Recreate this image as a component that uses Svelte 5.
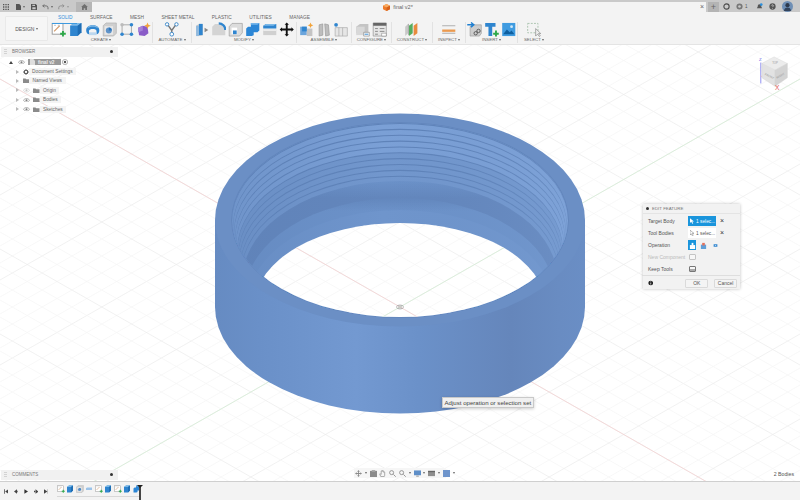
<script>
  const tabs = ["SOLID", "SURFACE", "MESH", "SHEET METAL", "PLASTIC", "UTILITIES", "MANAGE"]

  const tree = [
    { label: "Document Settings", icon: "gear" },
    { label: "Named Views", icon: "folder" },
    { label: "Origin", icon: "folder", eye: true, dim: true },
    { label: "Bodies", icon: "folder", eye: true },
    { label: "Sketches", icon: "folder", eye: true }
  ]

  // threads inside the ring, top to bottom
  const threads = []
  for (let i = 0; i < 10; i++) {
    const y = 123 + i * 5.85
    const rx = 168 - i * 1.05
    threads.push({ y, rx, color: "#5f83b9" })
    threads.push({ y: y + 1.1, rx, color: i < 5 ? "#7ba0d6" : "#7297cd" })
  }

  // isometric floor grid
  const gridLines = []
  for (let k = -50; k <= 50; k++) {
    const c = 307 + k * 17
    const major = k % 5 == 0
    gridLines.push({ y1: c - 400 * 0.57, y2: c + 400 * 0.57, major })
    gridLines.push({ y1: c + 400 * 0.57, y2: c - 400 * 0.57, major })
  }

  const timeline = ["sketch", "extrude", "hole", "flat", "sketch", "extrude", "sketch", "extrude", "combine"]
</script>

{#snippet sketch()}
  <svg class="ic" viewBox="0 0 16 16"><rect x="1" y="1.5" width="11.5" height="11.5" fill="#fff" stroke="#9a9a9a"/><path d="M3 10l6-6" stroke="#d29a6a" stroke-width="1.2"/><path d="M3 3.5h2M7 3.5h2" stroke="#bbb"/><path d="M12.5 9.5v6M9.5 12.5h6" stroke="#2ea84a" stroke-width="2"/></svg>
{/snippet}
{#snippet extrude()}
  <svg class="ic" viewBox="0 0 16 16"><path d="M2 4l4-3h8v10l-4 4H2z" fill="#2f85cf"/><path d="M2 4l4-3h8l-4 3z" fill="#7cb9e8"/><path d="M10 4l4-3v10l-4 4z" fill="#1e6db4"/></svg>
{/snippet}
{#snippet hole()}
  <svg class="ic" viewBox="0 0 16 16"><path d="M1 4l3-3h11v11l-3 3H1z" fill="#cfcfcf" stroke="#a5a5a5" stroke-width=".6"/><rect x="2.5" y="4.5" width="9" height="9" fill="#e8e8e8"/><circle cx="7" cy="9" r="3.2" fill="#5f93c8"/><path d="M7 9V5.8A3.2 3.2 0 0 1 10.2 9z" fill="#2d76bc"/></svg>
{/snippet}
{#snippet flat()}
  <svg class="ic" viewBox="0 0 16 16"><path d="M2 6h12v4H2z" fill="#9cc3e8"/><path d="M2 6l3-2h9l-0 2z" fill="#c5dcf1"/></svg>
{/snippet}
{#snippet combine()}
  <svg class="ic" viewBox="0 0 16 16"><path d="M6 1h9v8l-2 2H9v3l-2 1H1V7l2-2h3z" fill="#2b86d6"/><path d="M6 1h9l-2 2H6z" fill="#74b4ea"/></svg>
{/snippet}

{#snippet tlIcon(name)}
  {#if name == "sketch"}{@render sketch()}
  {:else if name == "extrude"}{@render extrude()}
  {:else if name == "hole"}{@render hole()}
  {:else if name == "flat"}{@render flat()}
  {:else}{@render combine()}{/if}
{/snippet}

{#snippet eye(dim)}
  <svg class="eye" class:dim viewBox="0 0 10 6"><path d="M.5 3C2 1 3.500.5 5 .5S8 1 9.500 3C8 5 6.500 5.500 5 5.500S2 5 .5 3z" fill="none" stroke="#7d7d7d" stroke-width=".8"/><circle cx="5" cy="3" r="1.500" fill="#7d7d7d"/></svg>
{/snippet}

{#snippet folder()}
  <svg class="fold" viewBox="0 0 8 6"><path d="M0 .5h3l1 1h4V6H0z" fill="#8b8b8b"/></svg>
{/snippet}

<div class="app">
  <header class="topbar">
    <div class="qat">
      <svg class="tb grid9" viewBox="0 0 9 9" fill="#555"><path d="M0 0h2v2H0zM3.500 0h2v2h-2zM7 0h2v2H7zM0 3.500h2v2H0zM3.500 3.500h2v2h-2zM7 3.500h2v2H7zM0 7h2v2H0zM3.500 7h2v2h-2zM7 7h2v2H7z"/></svg>
      <svg class="tb file" viewBox="0 0 8 9" fill="#555"><path d="M0 0h5l3 3v6H0z"/></svg>
      <i class="caret"></i>
      <svg class="tb save" viewBox="0 0 9 9" fill="#555"><path d="M0 0h7l2 2v7H0z"/><path d="M2 1h4v2H2zM2 5h5v3H2z" fill="#c9c9c9"/></svg>
      <svg class="tb undo" viewBox="0 0 9 8" fill="none" stroke="#666" stroke-width="1.200"><path d="M1 2.500h4.500a2.500 2.500 0 0 1 2.500 2.500v2M3 .5l-2 2 2 2"/></svg>
      <i class="caret"></i>
      <svg class="tb redo" viewBox="0 0 9 8" fill="none" stroke="#8c8c8c" stroke-width="1.200"><path d="M8 2.500H3.500A2.500 2.500 0 0 0 1 5v2M6 .5l2 2-2 2"/></svg>
      <i class="caret light"></i>
    </div>
    <div class="home">
      <svg viewBox="0 0 9 8" fill="#6f6f6f"><path d="M4.500 0L9 4H7.800v4H5.500V5.500h-2V8H1.200V4H0z"/></svg>
    </div>
    <div class="doc-tab">
      <div class="doc-title">
        <svg viewBox="0 0 8 8"><path d="M4 0l4 2v4L4 8 0 6V2z" fill="#ee7b2a"/><path d="M4 0l4 2-4 2-4-2z" fill="#f7ab62"/><path d="M4 4l4-2v4L4 8z" fill="#d6601a"/></svg>
        <span>final v2*</span>
      </div>
      <span class="close">×</span>
    </div>
    <div class="account">
      <span class="plus">+</span>
      <svg class="status" viewBox="0 0 8 8"><circle cx="4" cy="4" r="3" fill="none" stroke="#4b4b4b" stroke-width="1.300"/></svg>
      <span class="clock"><svg viewBox="0 0 8 8"><circle cx="4" cy="4" r="3.500" fill="#777"/><circle cx="4" cy="4" r="1.500" fill="#c9c9c9"/></svg>1</span>
      <svg class="bell" viewBox="0 0 8 8"><path d="M4 1.500c1.500 0 2 1 2 2.500l1 2H1l1-2c0-1.500.5-2.500 2-2.500z" fill="#555"/><circle cx="6" cy="1.800" r="1.500" fill="#2a8fdc"/></svg>
      <svg class="help" viewBox="0 0 8 8"><circle cx="4" cy="4" r="3.600" fill="#555"/><path d="M3 3a1 1 0 1 1 1.500 1L4 4.600" fill="none" stroke="#ddd" stroke-width=".8"/><circle cx="4" cy="6" r=".5" fill="#ddd"/></svg>
      <svg class="avatar" viewBox="0 0 12 12"><circle cx="6" cy="6" r="6" fill="#6f8fb5"/><circle cx="6" cy="4.500" r="2.300" fill="#2e3a4c"/><path d="M2 11c.5-3 2-4 4-4s3.500 1 4 4z" fill="#33445c"/></svg>
    </div>
  </header>

  <section class="toolbar">
    <button class="design">DESIGN <i class="caret"></i></button>
    <div class="ribbon">
      <nav class="tabs">
        {#each tabs as tab, i}
          <span class:active={i == 0}>{tab}</span>
        {/each}
      </nav>
      <div class="groups">
        <div class="group">
          <div class="icons">
            {@render sketch()}
            {@render extrude()}
            <svg class="ic" viewBox="0 0 16 16"><path d="M1 9c0-4 3-5.500 7-5.500S15 5 15 9c0 2.500-1.500 4-3 4V9.500C12 8 10 7.500 8 7.500S4 8 4 9.500V13c-1.500 0-3-1.500-3-4z" fill="#2f85cf"/><path d="M2 7c1-2.500 3-3.500 6-3.500S13 4.500 14 7c-1.500-1.500-3.500-2-6-2S3.500 5.500 2 7z" fill="#7fb8e6"/><path d="M4 11h8v3H4z" fill="#bcd7ee"/></svg>
            {@render hole()}
            <svg class="ic" viewBox="0 0 16 16"><path d="M3 3h10v10H3z" fill="none" stroke="#a8a8a8"/><circle cx="3" cy="3" r="1.900" fill="#bbb"/><circle cx="13" cy="3" r="1.900" fill="#2f85cf"/><circle cx="3" cy="13" r="1.900" fill="#2f85cf"/><circle cx="13" cy="13" r="1.900" fill="#2f85cf"/></svg>
            <svg class="ic" viewBox="0 0 16 16"><path d="M2 6l5-2 5 1 1 7-4 3-6-1z" fill="#8a5cc8"/><path d="M2 6l5-2v5l-5 2z" fill="#a583d8"/><path d="M12 .5l1 2.500 2.500 1-2.500 1-1 2.500-1-2.500-2.500-1 2.500-1z" fill="#f2a33a"/></svg>
          </div>
          <span class="glabel">CREATE <i class="caret"></i></span>
        </div>
        <div class="group">
          <div class="icons">
            <svg class="ic" viewBox="0 0 16 16"><path d="M3 2l5 7 5-7M8 9v4" fill="none" stroke="#777" stroke-width="1.500"/><circle cx="3" cy="2.500" r="1.800" fill="#fff" stroke="#3a86c8"/><circle cx="13" cy="2.500" r="1.800" fill="#fff" stroke="#3a86c8"/><circle cx="8" cy="13" r="2" fill="#fff" stroke="#3a86c8"/></svg>
          </div>
          <span class="glabel">AUTOMATE <i class="caret"></i></span>
        </div>
        <div class="group">
          <div class="icons">
            <svg class="ic" viewBox="0 0 16 16"><path d="M2 4l3-2h4v12l-3 1H2z" fill="#c9c9c9"/><path d="M5 2h4v12H5z" fill="#2f85cf"/><path d="M2 4h3v11H2z" fill="#8fb9de"/><path d="M11 6l4 2.500-4 2.500z" fill="#888"/></svg>
            <svg class="ic" viewBox="0 0 16 16"><path d="M1 14V5l3-3h4a7 7 0 0 1 7 7v5z" fill="#d4d4d4"/><path d="M8 1.500a7 7 0 0 1 7 7" fill="none" stroke="#2f85cf" stroke-width="2.400"/></svg>
            <svg class="ic" viewBox="0 0 16 16"><path d="M1 5l3-3.500h11v10L12 15H1z" fill="#dcdcdc" stroke="#9a9a9a" stroke-width=".7"/><path d="M3.500 6h6v7h-6z" fill="#fff"/><path d="M5 9h4v4H5z" fill="#2f85cf"/></svg>
            {@render combine()}
            <svg class="ic" viewBox="0 0 16 16"><path d="M1 4l3-2h11v5H1z" fill="#2f85cf"/><path d="M1 4l3-2h11l-3 2z" fill="#7cb9e8"/><path d="M1 8h14v6H1z" fill="#d0d0d0"/><path d="M1 8h14v1.500H1z" fill="#eee"/></svg>
            <svg class="ic" viewBox="0 0 16 16" fill="#111"><path d="M8 .5l2.300 2.500H9V7h4V5.700L15.500 8 13 10.300V9H9v4h1.300L8 15.500 5.700 13H7V9H3v1.300L.5 8 3 5.700V7h4V3H5.700z"/></svg>
          </div>
          <span class="glabel">MODIFY <i class="caret"></i></span>
        </div>
        <div class="group">
          <div class="icons">
            <svg class="ic" viewBox="0 0 16 16"><path d="M1 5h7v9H1z" fill="#6ba5dc"/><path d="M8 7h6v8H8z" fill="#c4c4c4"/><path d="M3 5h5v5H3z" fill="#2f85cf"/><path d="M12 .5l.9 2.100 2.100.9-2.100.9-.9 2.100-.9-2.100-2.100-.9 2.100-.9z" fill="#f2a33a"/></svg>
            <svg class="ic" viewBox="0 0 16 16" fill="#bdbdbd" stroke="#8f8f8f" stroke-width=".6"><path d="M3 3l4-1v12l-4 1z"/><path d="M9 2l4 1 1 11-4 1z"/></svg>
            <svg class="ic" viewBox="0 0 16 16"><circle cx="3" cy="3" r="2" fill="#2f85cf"/><path d="M2 6h13v9H2z" fill="#e6e6e6" stroke="#a8a8a8" stroke-width=".7"/><path d="M6 6v9M10 6v9" stroke="#a8a8a8" stroke-width=".7"/></svg>
          </div>
          <span class="glabel">ASSEMBLE <i class="caret"></i></span>
        </div>
        <div class="group">
          <div class="icons">
            <svg class="ic" viewBox="0 0 16 16"><path d="M1 5l4-3h9v10H1z" fill="#c4c4c4"/><path d="M1 5h9v9H1z" fill="#d8d8d8"/><path d="M9 11h6v4H9z" fill="#fff" stroke="#777" stroke-width=".6"/><path d="M10 13h4" stroke="#2f85cf"/></svg>
            <svg class="ic" viewBox="0 0 16 16"><path d="M1 1h14v14H1z" fill="#e6e6e6" stroke="#8f8f8f" stroke-width=".7"/><path d="M1 1h14v3H1z" fill="#666"/><path d="M3 7h3M8 7h5M3 10h3M8 10h5M3 13h3" stroke="#888"/><path d="M10 12h5v3h-5z" fill="#fff" stroke="#777" stroke-width=".5"/></svg>
          </div>
          <span class="glabel">CONFIGURE <i class="caret"></i></span>
        </div>
        <div class="group">
          <div class="icons">
            <svg class="ic" viewBox="0 0 16 16"><path d="M1 5l3-3v10l-3 3z" fill="#c8c8c8"/><path d="M5 4l4-3v11l-4 3z" fill="#55ad5f"/><path d="M10 4l4-3v11l-4 3z" fill="#e88b3e"/><path d="M4.500 2v12" stroke="#aaa"/></svg>
          </div>
          <span class="glabel">CONSTRUCT <i class="caret"></i></span>
        </div>
        <div class="group">
          <div class="icons">
            <svg class="ic" viewBox="0 0 16 16"><path d="M1 4h14" stroke="#aaa"/><path d="M1 8h14v2.500H1z" fill="#eb9a4f"/><path d="M1 12h14" stroke="#aaa"/></svg>
          </div>
          <span class="glabel">INSPECT <i class="caret"></i></span>
        </div>
        <div class="group">
          <div class="icons">
            <svg class="ic" viewBox="0 0 16 16"><path d="M3 5l3-2h9v9l-2 3H3z" fill="#cdcdcd" stroke="#8f8f8f" stroke-width=".6"/><path d="M0 3h6M4 .5L7 3 4 5.500" fill="none" stroke="#1f7fd0" stroke-width="1.500"/><circle cx="9" cy="12" r="1.800" fill="none" stroke="#555"/><circle cx="12" cy="9.500" r="1.800" fill="none" stroke="#555"/></svg>
            <svg class="ic" viewBox="0 0 16 16"><path d="M1 1h11v4H8.500v10h-4V5H1z" fill="#2f85cf"/><path d="M12.500 9v6.500M9.500 12.500h6" stroke="#2ea84a" stroke-width="2"/></svg>
            <svg class="ic" viewBox="0 0 16 16"><path d="M1 1h14v14H1z" fill="#3f9be0"/><path d="M2 13l4-5 3 3 2-2 3 4z" fill="#0f5f9f"/><circle cx="11" cy="5" r="1.500" fill="#cfe7f8"/></svg>
          </div>
          <span class="glabel">INSERT <i class="caret"></i></span>
        </div>
        <div class="group last">
          <div class="icons">
            <svg class="ic" viewBox="0 0 16 16"><rect x="1.500" y="1.500" width="11" height="10" fill="none" stroke="#a9c2ad" stroke-dasharray="2 1.400"/><path d="M10 7v8l2-2 2 2.500 1-.8-2-2.400h2.500z" fill="#eee" stroke="#777" stroke-width=".6"/></svg>
          </div>
          <span class="glabel">SELECT <i class="caret"></i></span>
        </div>
      </div>
    </div>
  </section>

  <main class="viewport">
    <svg class="scene" viewBox="0 45 800 436">
      <defs>
        <g id="floor">
          {#each gridLines as l}
            <line x1="0" y1={l.y1} x2="800" y2={l.y2} stroke={l.major ? "#ebebeb" : "#f5f5f5"} stroke-width=".7"/>
          {/each}
          <line x1="0" y1="79" x2="800" y2="535" stroke="#f3cfcf" stroke-width=".7"/>
          <line x1="0" y1="535" x2="800" y2="79" stroke="#d3ecd3" stroke-width=".7"/>
        </g>
        <linearGradient id="side" x1="215" x2="585" y1="0" y2="0" gradientUnits="userSpaceOnUse">
          <stop offset="0" stop-color="#668bc2"/>
          <stop offset=".12" stop-color="#6a90c8"/>
          <stop offset=".38" stop-color="#7399d1"/>
          <stop offset=".55" stop-color="#6b91c9"/>
          <stop offset=".8" stop-color="#6586bb"/>
          <stop offset=".93" stop-color="#698cc2"/>
          <stop offset="1" stop-color="#6a8ec5"/>
        </linearGradient>
        <linearGradient id="wall" x1="0" x2="0" y1="180" y2="198" gradientUnits="userSpaceOnUse">
          <stop offset="0" stop-color="#6c92c9"/>
          <stop offset="1" stop-color="#6386bc"/>
        </linearGradient>
        <linearGradient id="shelf" x1="0" x2="0" y1="198" y2="211" gradientUnits="userSpaceOnUse">
          <stop offset="0" stop-color="#6387bd"/>
          <stop offset="1" stop-color="#6c92c9"/>
        </linearGradient>
        <linearGradient id="shade" x1="232" x2="568" y1="0" y2="0" gradientUnits="userSpaceOnUse">
          <stop offset="0" stop-color="#5a7eb4" stop-opacity=".35"/>
          <stop offset=".45" stop-color="#5a7eb4" stop-opacity="0"/>
          <stop offset="1" stop-color="#86a9dc" stop-opacity=".25"/>
        </linearGradient>
        <clipPath id="inner"><ellipse cx="400" cy="220" rx="168" ry="97"/></clipPath>
      </defs>

      <rect x="0" y="45" width="800" height="436" fill="#fff"/>
      <use href="#floor"/>

      <path d="M215 220V307A185 106.500 0 0 0 585 307V220z" fill="url(#side)"/>
      <ellipse cx="400" cy="220" rx="185" ry="106.500" fill="#6b8fc5"/>
      <ellipse cx="400" cy="220" rx="168.800" ry="97.800" fill="#6285bb"/>

      <g clip-path="url(#inner)">
        <rect x="215" y="110" width="370" height="220" fill="#7297cd"/>
        {#each threads as t}
          <ellipse cx="400" cy={t.y + 97} rx={t.rx} ry="97" fill={t.color}/>
        {/each}
        <ellipse cx="400" cy="278" rx="157" ry="97" fill="url(#wall)"/>
        <ellipse cx="400" cy="295" rx="155" ry="97" fill="url(#shelf)"/>
        <ellipse cx="400" cy="305" rx="153" ry="95" fill="#6f95cc"/>
        <rect x="215" y="110" width="370" height="220" fill="url(#shade)"/>
        <clipPath id="lens"><ellipse cx="400" cy="305" rx="145" ry="82"/></clipPath>
        <g clip-path="url(#lens)">
          <rect x="215" y="210" width="370" height="120" fill="#fff"/>
          <use href="#floor"/>
        </g>
      </g>

      <g fill="none" stroke="#8f8f8f" stroke-width=".6">
        <ellipse cx="400" cy="307" rx="3.500" ry="2"/>
        <path d="M399 305.300v3.400M401 305.300v3.400"/>
      </g>
    </svg>

    <div class="panel-bar browser">
      <span class="grip"></span><span class="pb-title">BROWSER</span><i class="pin"></i>
    </div>

    <div class="tree">
      <div class="root">
        <i class="down"></i>
        {@render eye(false)}
        <span class="root-chip">
          <svg viewBox="0 0 6 7"><path d="M0 0h4l2 2v5H0z" fill="#dedede"/></svg>
          final v2
        </span>
        <svg class="target" viewBox="0 0 8 8"><circle cx="4" cy="4" r="3.500" fill="#fff" stroke="#777" stroke-width=".7"/><circle cx="4" cy="4" r="1.600" fill="#555"/></svg>
      </div>
      {#each tree as row}
        <div class="row">
          <i class="right"></i>
          {#if row.eye}{@render eye(row.dim)}{/if}
          {#if row.icon == "gear"}
            <svg class="gear" viewBox="0 0 8 8"><circle cx="4" cy="4" r="2.300" fill="none" stroke="#555" stroke-width="1.500"/><path d="M4 0v1.500M4 6.500V8M0 4h1.500M6.500 4H8M1.200 1.200l1 1M5.800 5.800l1 1M1.200 6.800l1-1M5.800 2.200l1-1" stroke="#555"/></svg>
          {:else}
            {@render folder()}
          {/if}
          <span class="chip">{row.label}</span>
        </div>
      {/each}
    </div>

    <div class="cube">
      <svg viewBox="0 0 40 42">
        <path d="M4 10v22" stroke="#8c8cf0" stroke-width="1"/>
        <path d="M4 24l16 11" stroke="#eeb0b0" stroke-width="1"/>
        <path d="M5 11l13-7 14 7-13 7z" fill="#ececec" stroke="#d6d6d6" stroke-width=".4"/>
        <path d="M5 11l14 7v17L5 26z" fill="#e2e2e2" stroke="#d6d6d6" stroke-width=".4"/>
        <path d="M19 18l13-7v15L19 35z" fill="#d3d3d3" stroke="#cecece" stroke-width=".4"/>
        <text x="8" y="23" transform="rotate(27 8 23)" class="cube-t">FRONT</text>
        <text x="21" y="27" transform="rotate(-28 21 27)" class="cube-t">RIGHT</text>
        <text x="16" y="12" class="cube-t">TOP</text>
        <text x="2" y="8" class="axis z">Z</text>
        <text x="19" y="39" class="axis x">X</text>
      </svg>
    </div>

    <div class="feature">
      <div class="f-head"><i class="pin"></i>EDIT FEATURE</div>
      <div class="f-body">
        <div class="f-row">
          <span class="f-label">Target Body</span>
          <span class="sel on"><svg viewBox="0 0 5 7"><path d="M0 0v6l1.500-1.500L3 7l1-.5L2.800 4H5z" fill="#fff"/></svg>1 selec...</span>
          <span class="x">×</span>
        </div>
        <div class="f-row">
          <span class="f-label">Tool Bodies</span>
          <span class="sel"><svg viewBox="0 0 5 7"><path d="M0 0v6l1.500-1.500L3 7l1-.5L2.800 4H5z" fill="#fff" stroke="#555" stroke-width=".5"/></svg>1 selec...</span>
          <span class="x">×</span>
        </div>
        <div class="f-row">
          <span class="f-label">Operation</span>
          <span class="op on"><svg viewBox="0 0 8 8"><path d="M1 3.500h6V8H1z" fill="#fff"/><path d="M3 3.500h2V1H3z" fill="#fff"/></svg></span>
          <span class="op"><svg viewBox="0 0 8 8"><path d="M1 3h6v5H1z" fill="#5f9fd8"/><path d="M2.500 1h3v3h-3z" fill="#e2705c"/></svg></span>
          <span class="op small"><svg viewBox="0 0 8 8"><path d="M1 2h6v4H1z" fill="#2f85cf"/><path d="M3 3.500h2v1H3z" fill="#fff"/></svg></span>
        </div>
        <div class="f-row off">
          <span class="f-label">New Component</span>
          <i class="check"></i>
        </div>
        <div class="f-row">
          <span class="f-label">Keep Tools</span>
          <i class="check dark"></i>
        </div>
      </div>
      <div class="f-foot">
        <svg class="info" viewBox="0 0 8 8"><circle cx="4" cy="4" r="3.500" fill="#222"/><path d="M4 3.500V6.300M4 1.700v1" stroke="#fff"/></svg>
        <button>OK</button>
        <button>Cancel</button>
      </div>
    </div>

    <div class="tooltip">Adjust operation or selection set</div>

    <div class="panel-bar comments">
      <span class="grip"></span><span class="pb-title">COMMENTS</span><i class="pin"></i>
    </div>

    <div class="navbar">
      <svg class="nv" viewBox="0 0 8 8" fill="#8b8b8b"><path d="M4 0l1.500 2h-1v1.500H6v-1l2 1.500-2 1.500v-1H4.500V6h1L4 8 2.500 6h1V4.500H2v1L0 4l2-1.500v1h1.500V2h-1z"/></svg>
      <i class="caret"></i>
      <svg class="nv" viewBox="0 0 8 8" fill="#8b8b8b"><path d="M0 1h8v7H0z"/><path d="M2 0h4v2H2z" fill="#aaa"/></svg>
      <svg class="nv" viewBox="0 0 8 8" fill="none" stroke="#8b8b8b" stroke-width=".8"><path d="M2 7.500L.8 4.500l1 0L2.500 5V1.500a.5.500 0 0 1 1 0V.8a.5.500 0 0 1 1 0v1a.5.500 0 0 1 1 0v1a.5.500 0 0 1 1 0V6L6 7.500z"/></svg>
      <svg class="nv" viewBox="0 0 8 8" fill="none" stroke="#8b8b8b"><circle cx="3" cy="3" r="2.300"/><path d="M5 5l2.700 2.700"/></svg>
      <svg class="nv" viewBox="0 0 8 8" fill="none" stroke="#8b8b8b"><circle cx="3" cy="3" r="2.300"/><path d="M5 5l2.700 2.700"/></svg>
      <i class="caret"></i>
      <svg class="nv" viewBox="0 0 8 8"><path d="M0 .5h8v5.500H0z" fill="#5f8fc8"/><path d="M2.500 7h3" stroke="#8b8b8b"/></svg>
      <i class="caret"></i>
      <svg class="nv" viewBox="0 0 8 8"><path d="M0 1h8v6H0z" fill="#8f8f8f"/><path d="M0 1h8v1.500H0z" fill="#666"/></svg>
      <i class="caret"></i>
      <svg class="nv" viewBox="0 0 8 8"><path d="M0 0h8v8H0z" fill="#6f95cc"/></svg>
      <i class="caret"></i>
    </div>

    <span class="bodies">2 Bodies</span>
  </main>

  <footer class="timeline">
    <div class="controls">
      <svg viewBox="0 0 6 6" fill="#444"><path d="M0 0h1v6H0zM6 0v6L1.500 3z"/></svg>
      <svg viewBox="0 0 6 6" fill="#444"><path d="M4 0v6L0 3zM4.500 2h1.500v2H4.500z"/></svg>
      <svg viewBox="0 0 6 6" fill="#333"><path d="M.5 0l5 3-5 3z"/></svg>
      <svg viewBox="0 0 6 6" fill="#444"><path d="M2 0v6l4-3zM0 2h1.500v2H0z"/></svg>
      <svg viewBox="0 0 6 6" fill="#444"><path d="M6 0H5v6h1zM0 0v6l4.500-3z"/></svg>
    </div>
    <div class="steps">
      {#each timeline as step}
        <span class="step">{@render tlIcon(step)}</span>
      {/each}
    </div>
    <div class="marker"></div>
  </footer>
</div>

<style>
  :global(body) {
    margin: 0;
    background: #fff;
  }

  .app {
    width: 800px;
    height: 500px;
    display: flex;
    flex-direction: column;
    overflow: hidden;
    font-family: "Liberation Sans", Arial, sans-serif;
    color: #666;
  }

  i {
    display: block;
    flex: none;
  }

  .caret {
    display: inline-block;
    width: 0;
    height: 0;
    border-left: 1.500px solid transparent;
    border-right: 1.500px solid transparent;
    border-top: 2px solid #666;
    vertical-align: middle;
  }

  .caret.light {
    border-top-color: #999;
  }

  /* title bar */
  .topbar {
    height: 12px;
    flex: none;
    display: flex;
    background: #c9c9c9;
  }

  .qat {
    width: 76px;
    flex: none;
    display: flex;
    align-items: center;
    padding-top: 1px;
    box-sizing: border-box;
  }

  .tb {
    flex: none;
    height: 6px;
  }

  .grid9 { margin-left: 3px; }
  .file { margin-left: 7px; }
  .qat .caret { margin-left: 2px; }
  .save { margin-left: 6px; }
  .undo { margin-left: 5px; }
  .redo { margin-left: 5px; }

  .home {
    width: 16px;
    margin-top: 2px;
    background: #b6b6b6;
    display: flex;
    align-items: center;
    justify-content: center;
  }

  .home svg {
    width: 7px;
    height: 6px;
  }

  .doc-tab {
    width: 614px;
    flex: none;
    margin-top: 2px;
    background: #f3f3f3;
    position: relative;
    display: flex;
    align-items: center;
    justify-content: center;
    font-size: 5.500px;
  }

  .doc-title {
    display: flex;
    align-items: center;
    gap: 3px;
    margin-left: 0;
    transform: translateX(-1px);
  }

  .doc-title svg {
    width: 7px;
    height: 7px;
  }

  .close {
    position: absolute;
    right: 2px;
    top: 0;
    font-size: 7px;
    line-height: 10px;
    color: #666;
  }

  .account {
    flex: 1;
    position: relative;
    display: flex;
    align-items: center;
    padding-top: 1px;
  }

  .plus {
    width: 11px;
    height: 10px;
    margin-left: 2px;
    background: #b4b4b4;
    font-size: 9px;
    line-height: 10px;
    text-align: center;
    color: #666;
  }

  .status { width: 7px; height: 7px; margin-left: 4px; }
  .clock {
    display: flex;
    align-items: center;
    gap: 1px;
    margin-left: 6px;
    font-size: 4.500px;
    color: #555;
  }
  .clock svg { width: 7px; height: 7px; margin-right: 1px; }
  .bell { width: 7px; height: 7px; margin-left: 8px; }
  .help { width: 7px; height: 7px; margin-left: 6px; }
  .avatar { width: 11px; height: 11px; margin-left: 6px; }

  /* ribbon */
  .toolbar {
    height: 33px;
    flex: none;
    display: flex;
    background: #f3f3f3;
    border-bottom: 1px solid #e4e4e4;
    box-sizing: border-box;
  }

  .design {
    width: 43px;
    height: 25px;
    margin: 4px 0 0 5px;
    padding: 0;
    border: 1px solid #e9e9e9;
    border-radius: 1px;
    background: #f6f6f6;
    font-family: inherit;
    font-size: 5px;
    color: #555;
    flex: none;
  }

  .ribbon {
    margin-left: 2px;
    flex: 1;
    min-width: 0;
  }

  .tabs {
    height: 10px;
    display: flex;
    gap: 17.500px;
    padding: 2px 0 0 8px;
    box-sizing: border-box;
    font-size: 4.800px;
    line-height: 8px;
    color: #666;
  }

  .tabs span.active {
    color: #2f8fdb;
    position: relative;
  }

  .tabs span.active::after {
    content: "";
    position: absolute;
    left: -6px;
    right: -5px;
    top: 8.500px;
    height: 1px;
    background: #3d9ae0;
  }

  .groups {
    display: grid;
    grid-template-columns: 103px 39px 105px 55px 40px 41px 33px 52px 32px;
    height: 22px;
  }

  .group {
    display: flex;
    flex-direction: column;
    align-items: center;
    border-right: 1px solid #e2e2e2;
    box-sizing: border-box;
    height: 21px;
  }

  .group.last {
    border-right: none;
  }

  .icons {
    display: flex;
    gap: 1px;
    height: 16px;
    align-items: center;
  }

  .ic {
    width: 15.500px;
    height: 15px;
    flex: none;
    margin: 0 .25px;
  }

  .glabel {
    font-size: 4.400px;
    line-height: 6px;
    color: #666;
    white-space: nowrap;
  }

  /* 3d view */
  .viewport {
    flex: 1;
    position: relative;
    background: #fff;
    overflow: hidden;
    min-height: 0;
  }

  .scene {
    position: absolute;
    inset: 0;
    width: 800px;
    height: 436px;
    display: block;
  }

  .panel-bar {
    position: absolute;
    left: 1px;
    width: 117px;
    height: 9.500px;
    background: #f1f1f1;
    display: flex;
    align-items: center;
    font-size: 4.500px;
    color: #777;
  }

  .browser { top: 2px; }
  .comments { top: 425px; }

  .grip {
    width: 3px;
    height: 5px;
    margin-left: 3px;
    opacity: .25;
    background: repeating-linear-gradient(#777 0 1px, transparent 1px 2px);
  }

  .pb-title {
    margin-left: 5px;
    flex: 1;
  }

  .pin {
    width: 3px;
    height: 3px;
    border-radius: 50%;
    background: #333;
    margin-right: 5px;
  }

  .tree {
    position: absolute;
    left: 0;
    top: 12.500px;
    font-size: 4.800px;
    color: #666;
  }

  .root, .row {
    height: 9.400px;
    display: flex;
    align-items: center;
  }

  .root { padding-left: 9px; }
  .row { padding-left: 16px; }

  .down {
    width: 0;
    height: 0;
    border-left: 2px solid transparent;
    border-right: 2px solid transparent;
    border-bottom: 3px solid #444;
  }

  .right {
    width: 0;
    height: 0;
    border-top: 2.500px solid transparent;
    border-bottom: 2.500px solid transparent;
    border-left: 3px solid #b9b9b9;
  }

  .eye {
    width: 7px;
    height: 4.500px;
    flex: none;
  }

  .root .eye { margin-left: 5px; }
  .row .eye { margin-left: 4px; margin-right: 3px; }
  .eye.dim { opacity: .45; }

  .root-chip {
    display: flex;
    align-items: center;
    gap: 3px;
    height: 6.500px;
    width: 33px;
    box-sizing: border-box;
    padding-left: 2px;
    margin-left: 3px;
    background: #9a9a9a;
    color: #eee;
    font-weight: bold;
  }

  .root-chip svg { width: 5px; height: 6px; }

  .target {
    width: 6px;
    height: 6px;
    margin-left: 1px;
  }

  .gear {
    width: 6px;
    height: 6px;
    margin-left: 3.500px;
    flex: none;
  }

  .fold {
    width: 6.500px;
    height: 5px;
    margin-left: 3.500px;
    flex: none;
  }

  .row .eye + .fold { margin-left: 0; }

  .chip {
    background: #f4f4f4;
    padding: 0 3.500px;
    margin-left: 0;
    line-height: 7px;
  }

  .cube {
    position: absolute;
    left: 757px;
    top: 8px;
    width: 38px;
    height: 40px;
  }

  .cube svg { width: 100%; height: 100%; display: block; }

  .cube-t {
    font-size: 3px;
    fill: #999;
  }

  .axis { font-size: 4.500px; }
  .z { fill: #5a5ae6; }
  .x { fill: #e05555; }

  /* feature dialog */
  .feature {
    position: absolute;
    left: 643px;
    top: 159px;
    width: 97px;
    height: 85px;
    background: #f2f2f2;
    box-shadow: 0 0 3px rgba(0, 0, 0, .25);
    display: flex;
    flex-direction: column;
    font-size: 5px;
    color: #555;
  }

  .f-head {
    height: 9px;
    display: flex;
    align-items: center;
    font-size: 4.400px;
    color: #777;
    border-bottom: 1px solid #e4e4e4;
    flex: none;
  }

  .f-head .pin {
    margin: 0 3px 0 3px;
  }

  .f-body {
    flex: 1;
    padding-top: 1px;
  }

  .f-row {
    height: 12px;
    display: flex;
    align-items: center;
    padding-left: 5px;
  }

  .f-row.off { color: #bbb; }

  .f-label {
    width: 40px;
    flex: none;
  }

  .sel {
    width: 28px;
    height: 10px;
    background: #fff;
    display: flex;
    align-items: center;
    gap: 2px;
    padding-left: 2px;
    box-sizing: border-box;
    font-size: 4.800px;
    color: #555;
  }

  .sel svg { width: 4px; height: 6px; }

  .sel.on {
    background: #1a95dc;
    color: #fff;
  }

  .x {
    margin-left: 4px;
    font-size: 7px;
    line-height: 8px;
    color: #333;
  }

  .op {
    width: 8px;
    height: 10px;
    display: flex;
    align-items: center;
    justify-content: center;
    margin-right: 3.500px;
  }

  .op svg { width: 7px; height: 7px; }
  .op.on { background: #1a95dc; }
  .op.small svg { width: 5px; height: 5px; }

  .check {
    width: 4.500px;
    height: 4.500px;
    margin-left: 1px;
    border: .7px solid #c4c4c4;
    border-radius: 1px;
    background: #f7f7f7;
  }

  .check.dark {
    border-color: #777;
    background: linear-gradient(#f7f7f7 50%, #aaa 50%);
  }

  .f-foot {
    height: 14px;
    flex: none;
    border-top: 1px solid #dedede;
    display: flex;
    align-items: center;
    padding: 0 3px 0 5px;
    gap: 6px;
  }

  .info {
    width: 6px;
    height: 6px;
    margin-right: 26px;
  }

  .f-foot button {
    width: 25px;
    height: 9px;
    padding: 0;
    background: #f4f4f4;
    border: 1px solid #dadada;
    border-radius: 1px;
    font-family: inherit;
    font-size: 5px;
    line-height: 7px;
    color: #555;
  }

  .tooltip {
    position: absolute;
    left: 442px;
    top: 352px;
    height: 9px;
    padding: 0 1.500px;
    background: #f0f0f0;
    border: .5px solid #c9c9c9;
    box-shadow: 0 1px 3px rgba(0, 0, 0, .2);
    font-size: 6.100px;
    line-height: 9px;
    color: #444;
    white-space: nowrap;
  }

  .navbar {
    position: absolute;
    left: 354px;
    top: 423px;
    height: 10px;
    width: 92px;
    box-sizing: border-box;
    padding-left: 1px;
    display: flex;
    align-items: center;
    gap: 2.800px;
    background: #f6f6f6;
  }

  .nv {
    width: 7px;
    height: 7px;
    flex: none;
  }

  .bodies {
    position: absolute;
    right: 6px;
    top: 426px;
    font-size: 5.200px;
    color: #555;
  }

  /* timeline */
  .timeline {
    height: 19px;
    flex: none;
    background: #f3f3f3;
    border-top: 1px solid #cfcfcf;
    box-sizing: border-box;
    display: flex;
    align-items: center;
    position: relative;
  }

  .controls {
    display: flex;
    gap: 5.500px;
    margin-left: 3.500px;
    width: 53px;
  }

  .controls svg {
    width: 4.500px;
    height: 5px;
    flex: none;
  }

  .steps {
    display: flex;
    gap: 1.500px;
    padding-bottom: 3px;
    border-bottom: 1px solid #d8d8d8;
  }

  .step {
    width: 8px;
    height: 8px;
    display: block;
  }

  .step :global(svg) {
    width: 8px;
    height: 8px;
    display: block;
    margin: 0;
  }

  .marker {
    position: absolute;
    left: 139px;
    top: 4px;
    width: 1.500px;
    height: 14px;
    background: #444;
  }

  .marker::before {
    content: "";
    position: absolute;
    left: -2px;
    top: -1px;
    border-left: 3px solid transparent;
    border-right: 3px solid transparent;
    border-top: 3px solid #222;
  }
</style>
